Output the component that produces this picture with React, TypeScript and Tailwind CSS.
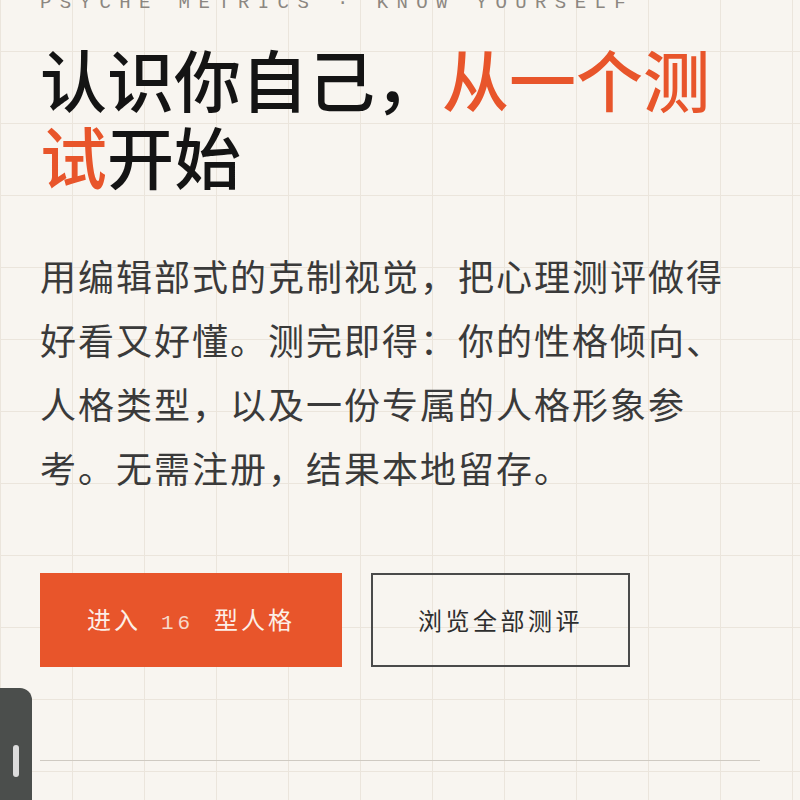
const cjk = '"Noto Sans CJK SC", "Noto Sans", sans-serif';
const mono = '"Liberation Mono", "DejaVu Sans Mono", monospace';

export default function App() {
  return (
    <div
      className="relative h-[800px] overflow-hidden bg-[#f8f5f0] bg-[linear-gradient(to_right,#ebe5dc_1px,transparent_1px),linear-gradient(to_bottom,#ebe5dc_1px,transparent_1px)] bg-[size:72px_72px] bg-[position:0_51px]"
      style={{ fontFamily: cjk }}
    >
      <div className="px-10">
        <p
          className="mt-[-7px] text-[19px] leading-[20px] tracking-[8.4px] text-[#8c8781] whitespace-nowrap"
          style={{ fontFamily: mono }}
        >
          PSYCHE METRICS · KNOW YOURSELF
        </p>

        <h1 className="mt-[26px] text-[67px] leading-[77px] font-medium text-[#141414]">
          认识你自己，<span className="text-[#e8552b]">从一个测试</span>开始
        </h1>

        <p className="mt-[50px] text-[36px] leading-[64px] tracking-[2px] text-[#3a3a3a]">
          用编辑部式的克制视觉，把心理测评做得好看又好懂。测完即得：你的性格倾向、人格类型，以及一份专属的人格形象参考。无需注册，结果本地留存。
        </p>

        <div className="mt-[74px] flex gap-[29px]">
          <button className="h-[94px] w-[302px] bg-[#e8552b] text-[24px] tracking-[3px] text-[#fcefe7] flex items-center justify-center">
            <span>
              进入
              <span className="mx-[20px] text-[21px] tracking-[4px] text-[#f7d9c9]" style={{ fontFamily: mono }}>
                16
              </span>
              型人格
            </span>
          </button>
          <button className="h-[94px] w-[259px] border-2 border-[#4a4a4a] text-[24px] tracking-[3.5px] text-[#2e2e2e] flex items-center justify-center">
            浏览全部测评
          </button>
        </div>

        <div className="mt-[93px] h-px bg-[#cfcac2]" />
      </div>

      <div className="absolute left-0 top-[688px] h-[140px] w-[32px] rounded-tr-[12px] bg-[#4b4e4c]">
        <div className="absolute left-[13px] top-[57px] h-[32px] w-[6px] rounded-full bg-[#dcdcdc]" />
      </div>
    </div>
  );
}
